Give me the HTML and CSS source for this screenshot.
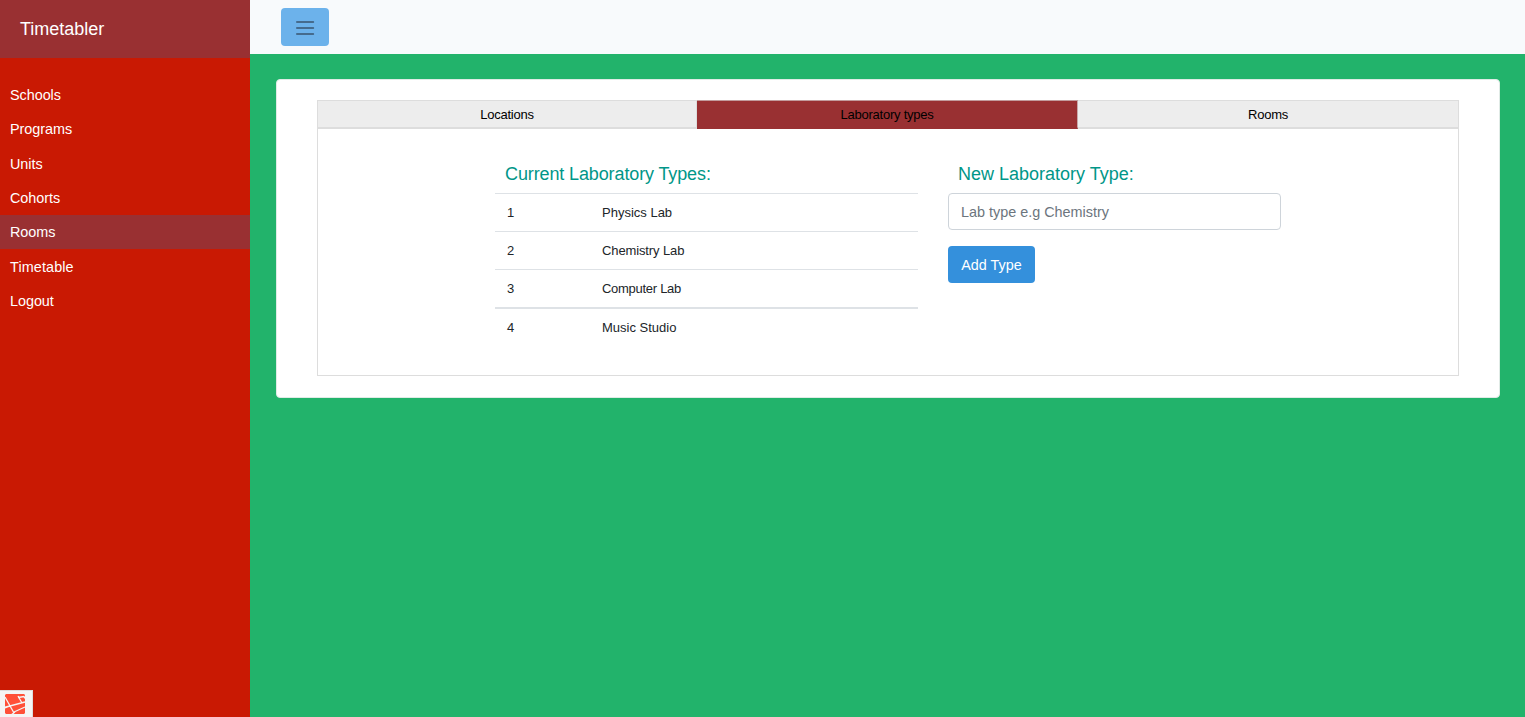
FILE: index.html
```html
<!DOCTYPE html>
<html lang="en">
<head>
<meta charset="utf-8">
<title>Timetabler</title>
<link rel="stylesheet" href="styles.css">
</head>
<body>
<div class="wrapper">
  <nav class="sidebar">
    <div class="sidebar-header">Timetabler</div>
    <ul class="menu">
      <li><a>Schools</a></li>
      <li><a>Programs</a></li>
      <li><a>Units</a></li>
      <li><a>Cohorts</a></li>
      <li class="active"><a>Rooms</a></li>
      <li><a class="wide">Timetable</a></li>
      <li><a>Logout</a></li>
    </ul>
  </nav>
  <main class="content">
    <header class="navbar">
      <button class="toggle" type="button" aria-label="Toggle sidebar">
        <svg width="22" height="22" viewBox="0 0 22 22" fill="none" stroke="#456b8d" stroke-width="1.8" stroke-linecap="round"><path d="M2.900 5h16.400M2.900 11h16.400M2.900 17h16.400"/></svg>
      </button>
    </header>
    <section class="card">
      <div class="tabs">
        <div class="tab">Locations</div>
        <div class="tab selected">Laboratory types</div>
        <div class="tab">Rooms</div>
      </div>
      <div class="panel">
        <div class="current">
          <h2 class="tight">Current Laboratory Types:</h2>
          <table class="types">
            <tr><td class="num">1</td><td>Physics Lab</td></tr>
            <tr><td class="num">2</td><td class="snug">Chemistry Lab</td></tr>
            <tr class="low"><td class="num">3</td><td class="tighter">Computer Lab</td></tr>
            <tr class="low last"><td class="num">4</td><td>Music Studio</td></tr>
          </table>
        </div>
        <form class="new">
          <h2>New Laboratory Type:</h2>
          <input class="field" type="text" placeholder="Lab type e.g Chemistry">
          <button class="add" type="button">Add Type</button>
        </form>
      </div>
    </section>
  </main>
</div>
<div class="debugbar">
  <svg width="22" height="22" viewBox="0 0 22 22"><path fill="#ff5038" d="M2 0h18l1 1v18l-1 1H2l-1-1V1z"/><path fill="none" stroke="#f5f5f5" stroke-width="1.300" d="M1 3l9 16M0 13.500l21-5.500M14 2l4 7M14 3.500l6-1 1 2M6 12l-5 2M10 18l11-5M7 21l4-3"/></svg>
</div>
</body>
</html>
```

FILE: styles.css
```css
* { box-sizing: border-box; }
body {
  margin: 0;
  height: 717px;
  overflow: hidden;
  background: #22b36b;
  color: #212529;
  font: 14.4px/1.6 "Liberation Sans", Arial, sans-serif;
}
.wrapper { display: flex; height: 717px; }
.sidebar { width: 250px; flex: none; background: #c91903; color: #fff; }
.sidebar-header {
  height: 57.600px;
  padding: 0 20px;
  background: #993032;
  font-size: 18px;
  line-height: 59px;
}
.menu { list-style: none; margin: 0; padding: 20px 0; }
.menu li { height: 34.360px; padding: 0.250px 10px 0; line-height: 34.360px; letter-spacing: -0.040px; }
.menu .wide { letter-spacing: 0.120px; }
.menu .active { background: #993032; }
.content { flex: 1; }
.navbar {
  height: 54px;
  padding: 8px 31px;
  background: #f8fafc;
}
.toggle {
  display: flex;
  align-items: center;
  justify-content: center;
  width: 48px;
  height: 38px;
  padding: 2px 0 0;
  border: 0;
  border-radius: 4px;
  background: #6cb2eb;
}
.card {
  height: 319px;
  margin: 25px 25px 0 26px;
  padding: 20px 40px;
  border: 1px solid #e0ebe6;
  border-radius: 4px;
  background: #fff;
}
.tabs {
  display: grid;
  grid-template-columns: 380px 381px 381px;
  grid-template-rows: 29px;
  color: #000;
  font-size: 13px;
  letter-spacing: -0.230px;
}
.tab {
  height: 29px;
  border: 1px solid #ddd;
  border-left: 0;
  border-bottom-width: 2px;
  background: #ededed;
  text-align: center;
  line-height: 28px;
}
.tab:first-child { border-left: 1px solid #ddd; }
.selected { background: #993032; border-color: #c39c9d #c9a9aa #993032 #993032; }
.panel {
  display: flex;
  gap: 30px;
  height: 247px;
  padding: 30px 0 0 177px;
  border: 1px solid #ddd;
  border-top: 0;
}
.current { width: 423px; }
.new { width: 332.600px; }
h2 {
  margin: 0;
  height: 34px;
  padding: 0 10px;
  color: #009688;
  font-size: 18px;
  font-weight: 400;
  line-height: 31px;
}
.tight { letter-spacing: -0.120px; }
.types { width: 100%; border-collapse: collapse; font-size: 13px; }
.types td {
  height: 38px;
  padding: 0 12px;
  border-top: 1px solid #dee2e6;
  line-height: 20px;
}
.types .low td { padding-top: 2px; }
.types .last td { border-top-width: 2px; }
.types .num { width: 95px; }
.types .snug { letter-spacing: -0.120px; }
.types .tighter { letter-spacing: -0.280px; }
.field {
  display: block;
  width: 100%;
  height: 37px;
  padding: 6px 12px;
  border: 1px solid #ced4da;
  border-radius: 4px;
  font: inherit;
}
.field::placeholder { color: #6c757d; }
.add {
  display: block;
  width: 87px;
  height: 37.400px;
  margin-top: 16px;
  padding: 1.600px 0 0;
  border: 0;
  border-radius: 4px;
  background: #3490dc;
  color: #fff;
  font: inherit;
}
.debugbar {
  position: absolute;
  left: 0;
  bottom: 0;
  width: 33px;
  height: 27px;
  padding: 3px 4px;
  border: 1px solid #ddd;
  border-width: 1px 1px 0 0;
  background: #f5f5f5;
}
.debugbar svg { display: block; }
```
